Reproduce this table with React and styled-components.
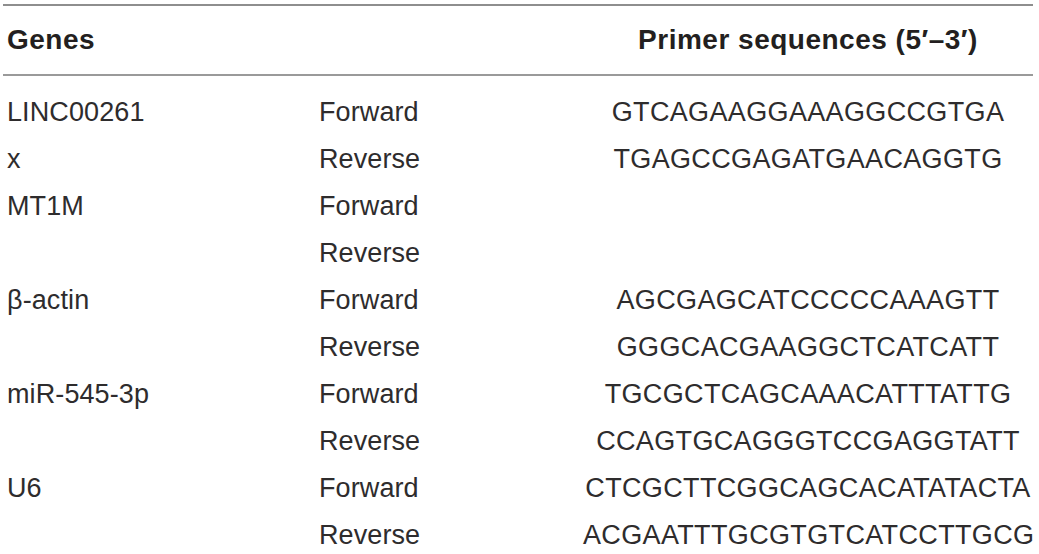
import React from "react";
import styled, { createGlobalStyle } from "styled-components";

const GlobalStyle = createGlobalStyle`
  html, body {
    margin: 0;
    padding: 0;
    background: #ffffff;
  }
  body {
    font-family: "Liberation Sans", Arial, Helvetica, sans-serif;
    color: #231f20;
  }
`;

const Page = styled.div`
  width: 1039px;
  height: 554px;
  overflow: hidden;
  padding: 4px 6px 0 3px;
  box-sizing: border-box;
`;

const Table = styled.div`
  width: 1030px;
  border-top: 2px solid #8e8e8e;
`;

const Row = styled.div`
  display: grid;
  grid-template-columns: 316px 264px 450px;
  align-items: center;
  height: ${(p) => (p.$header ? "68px" : "47px")};
  line-height: ${(p) => (p.$header ? "68px" : "47px")};
  font-size: ${(p) => (p.$header ? "28px" : "27px")};
  font-weight: ${(p) => (p.$header ? 700 : 400)};
  letter-spacing: ${(p) => (p.$header ? "0.5px" : "0.1px")};
  color: ${(p) => (p.$header ? "#231f20" : "#2e2c2d")};
  border-bottom: ${(p) => (p.$header ? "2px solid #9a9a9a" : "none")};
  white-space: nowrap;
`;

const Body = styled.div`
  padding-top: 13px;
`;

const Cell = styled.div`
  padding-left: ${(p) => (p.$first ? "4px" : "0")};
  text-align: ${(p) => (p.$center ? "center" : "left")};
  letter-spacing: ${(p) => (p.$seq ? "0.35px" : "inherit")};
`;

const rows = [
  ["LINC00261", "Forward", "GTCAGAAGGAAAGGCCGTGA"],
  ["x", "Reverse", "TGAGCCGAGATGAACAGGTG"],
  ["MT1M", "Forward", ""],
  ["", "Reverse", ""],
  ["β-actin", "Forward", "AGCGAGCATCCCCCAAAGTT"],
  ["", "Reverse", "GGGCACGAAGGCTCATCATT"],
  ["miR-545-3p", "Forward", "TGCGCTCAGCAAACATTTATTG"],
  ["", "Reverse", "CCAGTGCAGGGTCCGAGGTATT"],
  ["U6", "Forward", "CTCGCTTCGGCAGCACATATACTA"],
  ["", "Reverse", "ACGAATTTGCGTGTCATCCTTGCG"],
];

export default function App() {
  return (
    <>
      <GlobalStyle />
      <Page>
        <Table>
          <Row $header>
            <Cell $first>Genes</Cell>
            <Cell />
            <Cell $center>Primer sequences (5′–3′)</Cell>
          </Row>
          <Body>
            {rows.map((r, i) => (
              <Row key={i}>
                <Cell $first>{r[0]}</Cell>
                <Cell>{r[1]}</Cell>
                <Cell $center $seq>{r[2]}</Cell>
              </Row>
            ))}
          </Body>
        </Table>
      </Page>
    </>
  );
}
